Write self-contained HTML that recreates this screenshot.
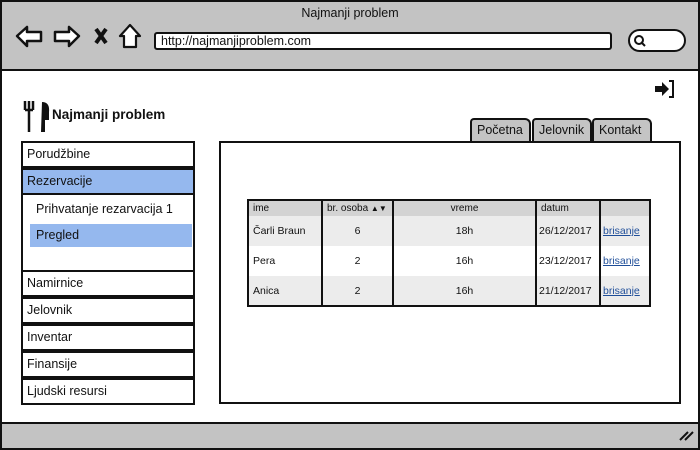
<!DOCTYPE html><html><head><style>
*{margin:0;padding:0;box-sizing:border-box}
body{width:700px;height:450px;position:relative;background:#fff;font-family:"Liberation Sans",sans-serif;font-size:12px;color:#111;overflow:hidden}
.a{position:absolute}
.item{position:absolute;left:21px;width:174px;height:27px;border:2px solid #111;background:#fff;padding:4px 0 0 4px;font-size:12.5px}
table{border-collapse:collapse;position:absolute;left:247px;top:199px;width:404px;font-size:10.5px;table-layout:fixed}
td{border-left:2px solid #111;border-right:2px solid #111;padding:0 4px;height:30px;white-space:nowrap;overflow:hidden}
tr.h td{height:16px;background:#d3d3d3;font-size:10px;line-height:12px}
tr.g td{background:#ececec}
.c{text-align:center}
a{color:#1f4e99;text-decoration:underline}
.tab{position:absolute;top:118px;height:24px;background:#c4c4c4;border:2px solid #111;border-bottom:none;border-radius:4px 6px 0 0;padding:3px 0 0 5px;font-size:12.5px}
</style></head><body>
<div class="a" style="left:0;top:0;width:700px;height:450px;border:2px solid #111"></div>
<div class="a" style="left:2px;top:2px;width:696px;height:69px;background:#c3c3c3;border-bottom:2px solid #111"></div>
<div class="a" style="left:0;top:6px;width:700px;text-align:center;font-size:12.5px">Najmanji problem</div>
<svg class="a" style="left:14px;top:22px" width="130" height="30">
<path d="M3 14 L13 5 L13 10 L27 10 L27 19 L13 19 L13 24 Z" fill="#fff" stroke="#111" stroke-width="2.5" stroke-linejoin="round"/>
<path d="M65 14 L55 5 L55 10 L41 10 L41 19 L55 19 L55 24 Z" fill="#fff" stroke="#111" stroke-width="2.5" stroke-linejoin="round"/>
<path d="M82 7 L92 21 M92 7 L82 21" stroke="#111" stroke-width="4"/>
<path d="M116 3 L106 14 L110 14 L110 25 L122 25 L122 14 L126 14 Z" fill="#fff" stroke="#111" stroke-width="2.2" stroke-linejoin="round"/>
</svg>
<div class="a" style="left:154px;top:32px;width:458px;height:18px;background:#fff;border:2px solid #111;border-radius:3px;padding:0 0 0 5px;font-size:12.5px;line-height:14px">http://najmanjiproblem.com</div>
<div class="a" style="left:628px;top:29px;width:58px;height:23px;background:#fff;border:2px solid #111;border-radius:12px"></div>
<svg class="a" style="left:633px;top:34px" width="14" height="14"><circle cx="6" cy="6" r="4" fill="none" stroke="#111" stroke-width="2"/><path d="M8 8 L12 12" stroke="#111" stroke-width="2"/></svg>
<svg class="a" style="left:654px;top:79px" width="22" height="20"><path d="M1 7 L8 7 L8 3 L15 10 L8 17 L8 13 L1 13 Z" fill="#111"/><path d="M15 2 L19 2 L19 18 L15 18" fill="none" stroke="#111" stroke-width="2"/></svg>
<svg class="a" style="left:23px;top:100px" width="28" height="34"><path d="M2 1 V10 M6 1 V10 M10 1 V10 M2 10 H10 M6 10 V32" stroke="#111" stroke-width="2.5" fill="none"/><path d="M19 2 Q27 2 26 12 L26 20 L22 20 L22 32 L18 32 Z" fill="#111"/></svg>
<div class="a" style="left:52px;top:107px;font-size:13.5px;font-weight:bold">Najmanji problem</div>
<div class="tab" style="left:470px;width:61px">Početna</div>
<div class="tab" style="left:532px;width:60px">Jelovnik</div>
<div class="tab" style="left:592px;width:60px">Kontakt</div>
<div class="a" style="left:219px;top:141px;width:462px;height:263px;border:2px solid #111;background:#fff"></div>
<div class="item" style="top:141px">Porudžbine</div>
<div class="item" style="top:168px;background:#95b8ee">Rezervacije</div>
<div class="a" style="left:21px;top:195px;width:174px;height:76px;border:2px solid #111;border-top:none;border-bottom:none"></div>
<div class="a" style="left:36px;top:202px;font-size:12.5px">Prihvatanje rezarvacija 1</div>
<div class="a" style="left:30px;top:224px;width:162px;height:23px;background:#95b8ee;padding:4px 0 0 6px;font-size:12.5px">Pregled</div>
<div class="item" style="top:270px">Namirnice</div>
<div class="item" style="top:297px">Jelovnik</div>
<div class="item" style="top:324px">Inventar</div>
<div class="item" style="top:351px">Finansije</div>
<div class="item" style="top:378px">Ljudski resursi</div>
<table style="border:2px solid #111">
<colgroup><col style="width:74px"><col style="width:71px"><col style="width:143px"><col style="width:64px"><col></colgroup>
<tr class="h"><td>ime</td><td>br. osoba <span style="font-size:8px">▲▼</span></td><td class="c">vreme</td><td>datum</td><td></td></tr>
<tr class="g"><td>Čarli Braun</td><td class="c">6</td><td class="c">18h</td><td style="padding:0 2px">26/12/2017</td><td style="padding:0 2px"><a>brisanje</a></td></tr>
<tr><td>Pera</td><td class="c">2</td><td class="c">16h</td><td style="padding:0 2px">23/12/2017</td><td style="padding:0 2px"><a>brisanje</a></td></tr>
<tr class="g"><td>Anica</td><td class="c">2</td><td class="c">16h</td><td style="padding:0 2px">21/12/2017</td><td style="padding:0 2px"><a>brisanje</a></td></tr>
</table>
<div class="a" style="left:2px;top:422px;width:696px;height:26px;background:#c3c3c3;border-top:2px solid #111"></div>
<svg class="a" style="left:678px;top:428px" width="16" height="14"><path d="M2 12 L10 4 M7 12 L15 4" stroke="#111" stroke-width="2"/></svg>
</body></html>
